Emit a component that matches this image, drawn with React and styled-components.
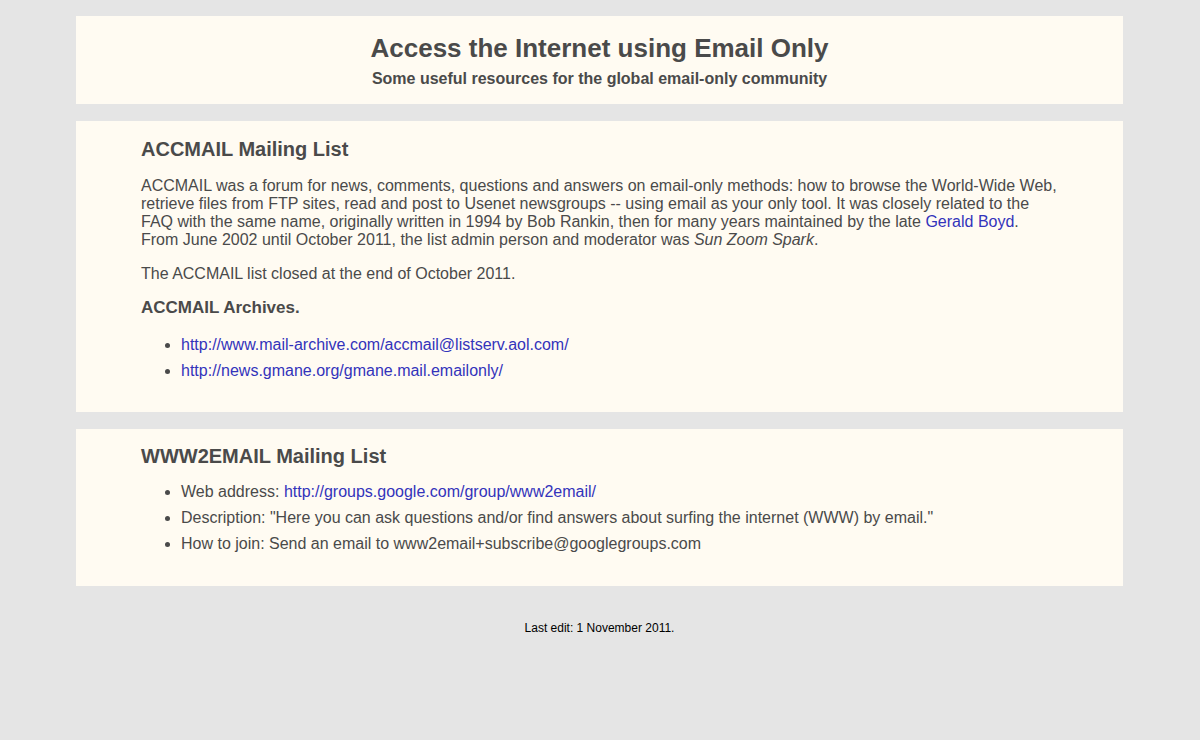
import React from 'react';
import styled, { createGlobalStyle } from 'styled-components';

const Global = createGlobalStyle`
  body {
    margin: 0;
    background: #e5e5e5;
    font-family: "Liberation Sans", Arial, sans-serif;
    color: #4a4a4a;
  }
`;

const Page = styled.div`
  width: 1047px;
  margin: 0 0 0 76px;
  padding-top: 16px;
  display: flex;
  flex-direction: column;
  gap: 17px;
`;

const Panel = styled.div`
  background: #fffbf2;
  padding: ${p => p.$pad || '16px 65px 18px'};
  text-align: ${p => (p.$center ? 'center' : 'left')};
`;

const Title = styled.h1`
  margin: 0;
  font-size: 26px;
  line-height: 32px;
`;

const Subtitle = styled.div`
  margin-top: 3px;
  font-size: 16px;
  font-weight: bold;
  line-height: 24px;
`;

const Heading = styled.h2`
  margin: 0 0 ${p => p.$gap || 16}px;
  font-size: 20px;
  line-height: 24px;
`;

const SubHeading = styled.h3`
  margin: 0 0 13px;
  font-size: 17px;
  line-height: 22px;
`;

const Para = styled.p`
  margin: 0 0 ${p => p.$gap || 16}px;
  font-size: 16px;
  line-height: 18px;
`;

const List = styled.ul`
  margin: 0;
  padding-left: 40px;
`;

const Item = styled.li`
  font-size: 16px;
  line-height: 26px;
`;

const Link = styled.a`
  color: #3333bb;
  text-decoration: none;
`;

const Footer = styled.div`
  text-align: center;
  font-size: 12px;
  color: #000;
  margin-top: 18px;
`;

export default function App() {
  return (
    <>
      <Global />
      <Page>
        <Panel $center $pad="16px 65px 13px">
          <Title>Access the Internet using Email Only</Title>
          <Subtitle>Some useful resources for the global email-only community</Subtitle>
        </Panel>
        <Panel $pad="16px 65px 28px">
          <Heading>ACCMAIL Mailing List</Heading>
          <Para>
            ACCMAIL was a forum for news, comments, questions and answers on email-only methods: how to browse the World-Wide Web, retrieve files from FTP sites, read and post to Usenet newsgroups -- using email as your only tool. It was closely related to the FAQ with the same name, originally written in 1994 by Bob Rankin, then for many years maintained by the late <Link href="#">Gerald Boyd</Link>.<br />
            From June 2002 until October 2011, the list admin person and moderator was <i>Sun Zoom Spark</i>.
          </Para>
          <Para $gap={14}>The ACCMAIL list closed at the end of October 2011.</Para>
          <SubHeading>ACCMAIL Archives.</SubHeading>
          <List>
            <Item><Link href="#">http://www.mail-archive.com/accmail@listserv.aol.com/</Link></Item>
            <Item><Link href="#">http://news.gmane.org/gmane.mail.emailonly/</Link></Item>
          </List>
        </Panel>
        <Panel $pad="15px 65px 29px">
          <Heading $gap={11}>WWW2EMAIL Mailing List</Heading>
          <List>
            <Item>Web address: <Link href="#">http://groups.google.com/group/www2email/</Link></Item>
            <Item>Description: "Here you can ask questions and/or find answers about surfing the internet (WWW) by email."</Item>
            <Item>How to join: Send an email to www2email+subscribe@googlegroups.com</Item>
          </List>
        </Panel>
        <Footer>Last edit: 1 November 2011.</Footer>
      </Page>
    </>
  );
}
